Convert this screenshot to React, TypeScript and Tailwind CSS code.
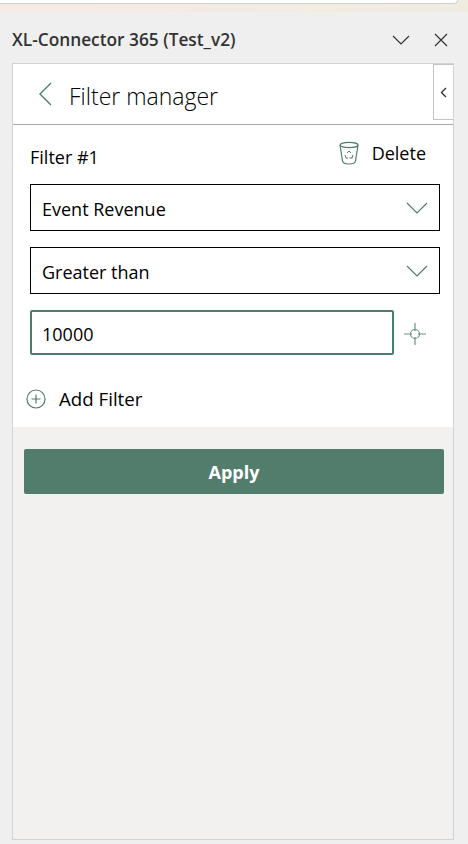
const font = { fontFamily: '"Open Sans", "Noto Sans", sans-serif' };

function Chevron() {
  return (
    <svg width="22" height="14" viewBox="0 0 22 14" fill="none" stroke="#4f7d6d" strokeWidth="1.2" className="shrink-0">
      <path d="M1 2 L11 12 L21 2" />
    </svg>
  );
}

function Select({ label }: { label: string }) {
  return (
    <div className="flex h-[47px] items-center justify-between border border-black pl-[11px] pr-[11px]">
      <span className="pt-[4px] text-[18px] text-black">{label}</span>
      <Chevron />
    </div>
  );
}

export default function App() {
  return (
    <div className="flex h-[844px] w-[468px] flex-col overflow-hidden bg-[#efefef]" style={font}>
      <div className="h-3 shrink-0 bg-gradient-to-r from-[#f6ebe2] to-[#f0ece0]">
        <div className="mr-[10px] h-[4px] rounded-br-md border-b border-r border-[#d0d0d0] bg-white" />
      </div>
      <div className="flex h-[51px] shrink-0 items-center justify-between pl-3 pr-[20px] pt-[4px]">
        <span className="text-[17.3px] font-semibold text-[#333333]">XL-Connector 365 (Test_v2)</span>
        <div className="flex items-center gap-[24px]">
          <svg width="18" height="10" viewBox="0 0 18 10" fill="none" stroke="#333" strokeWidth="1.2">
            <path d="M1 1 L9 9 L17 1" />
          </svg>
          <svg width="14" height="14" viewBox="0 0 14 14" fill="none" stroke="#333" strokeWidth="1.2">
            <path d="M1 1 L13 13 M13 1 L1 13" />
          </svg>
        </div>
      </div>
      <div className="ml-3 mr-[14px] flex h-[777px] flex-col border border-[#d2d2d2] bg-[#f2f1ef]">
        <div className="relative flex h-[61px] shrink-0 items-center border-b border-[#a8a8a8] bg-white pl-[25px]">
          <svg width="14" height="24" viewBox="0 0 14 24" fill="none" stroke="#4f7d6d" strokeWidth="1.4" className="shrink-0">
            <path d="M13 1 L2 12 L13 23" />
          </svg>
          <span className="ml-[17px] pt-[4px] text-[23px] font-light text-black">Filter manager</span>
          <div className="absolute right-0 top-0 flex h-[56px] w-[20px] items-center justify-center border border-r-0 border-[#c4c4c4] bg-white">
            <svg width="7" height="11" viewBox="0 0 7 11" fill="none" stroke="#333" strokeWidth="1.4">
              <path d="M6 1 L1.5 5.5 L6 10" />
            </svg>
          </div>
        </div>
        <div className="flex h-[302px] shrink-0 flex-col bg-white pl-[17px] pr-[13px]">
          <div className="flex h-[59px] shrink-0 items-center justify-between pr-[14px]">
            <span className="pt-[5px] text-[18px] text-black">Filter #1</span>
            <div className="flex items-center gap-[13px] pb-[4px]">
              <svg width="20" height="24" viewBox="0 0 20 24" fill="none" stroke="#4f7d6d" strokeWidth="1.2">
                <ellipse cx="10" cy="4" rx="9" ry="2.6" />
                <path d="M1 4 L3.5 20 Q4 23 10 23 Q16 23 16.5 20 L19 4" />
                <path d="M8 12 L10 10 L12 12 M14 14 L13 17 L10.5 17 M6 14 L7 17 L9 17" strokeWidth="1" />
              </svg>
              <span className="pt-[2px] text-[18px] text-black">Delete</span>
            </div>
          </div>
          <div className="flex flex-col gap-4">
            <Select label="Event Revenue" />
            <Select label="Greater than" />
          </div>
          <div className="mt-[16px] flex items-center">
            <div className="flex h-[45px] w-[364px] items-center rounded-[2px] border-2 border-[#4f7d6d] pl-[10px] pt-[3px] text-[18px] text-black">
              10000
            </div>
            <svg width="24" height="24" viewBox="0 0 24 24" fill="none" stroke="#6d9385" strokeWidth="1.2" className="ml-[9px] mt-[2px] shrink-0">
              <circle cx="12" cy="12" r="4.5" />
              <path d="M12 1 V9 M12 15 V23 M1 12 H9 M15 12 H23" />
            </svg>
          </div>
          <div className="ml-[-4px] mt-[30px] flex items-center gap-[13px]">
            <svg width="20" height="20" viewBox="0 0 20 20" fill="none" stroke="#4f7d6d" strokeWidth="1.2" className="shrink-0">
              <circle cx="10" cy="10" r="9" />
              <path d="M10 5.5 V14.5 M5.5 10 H14.5" />
            </svg>
            <span className="text-[18.7px] text-black">Add Filter</span>
          </div>
        </div>
        <div className="ml-[11px] mr-[9px] mt-[22px] flex h-[45px] shrink-0 items-center justify-center rounded-[2px] bg-[#527d6d] pt-[2px] text-[18px] font-bold text-white">
          Apply
        </div>
      </div>
    </div>
  );
}
